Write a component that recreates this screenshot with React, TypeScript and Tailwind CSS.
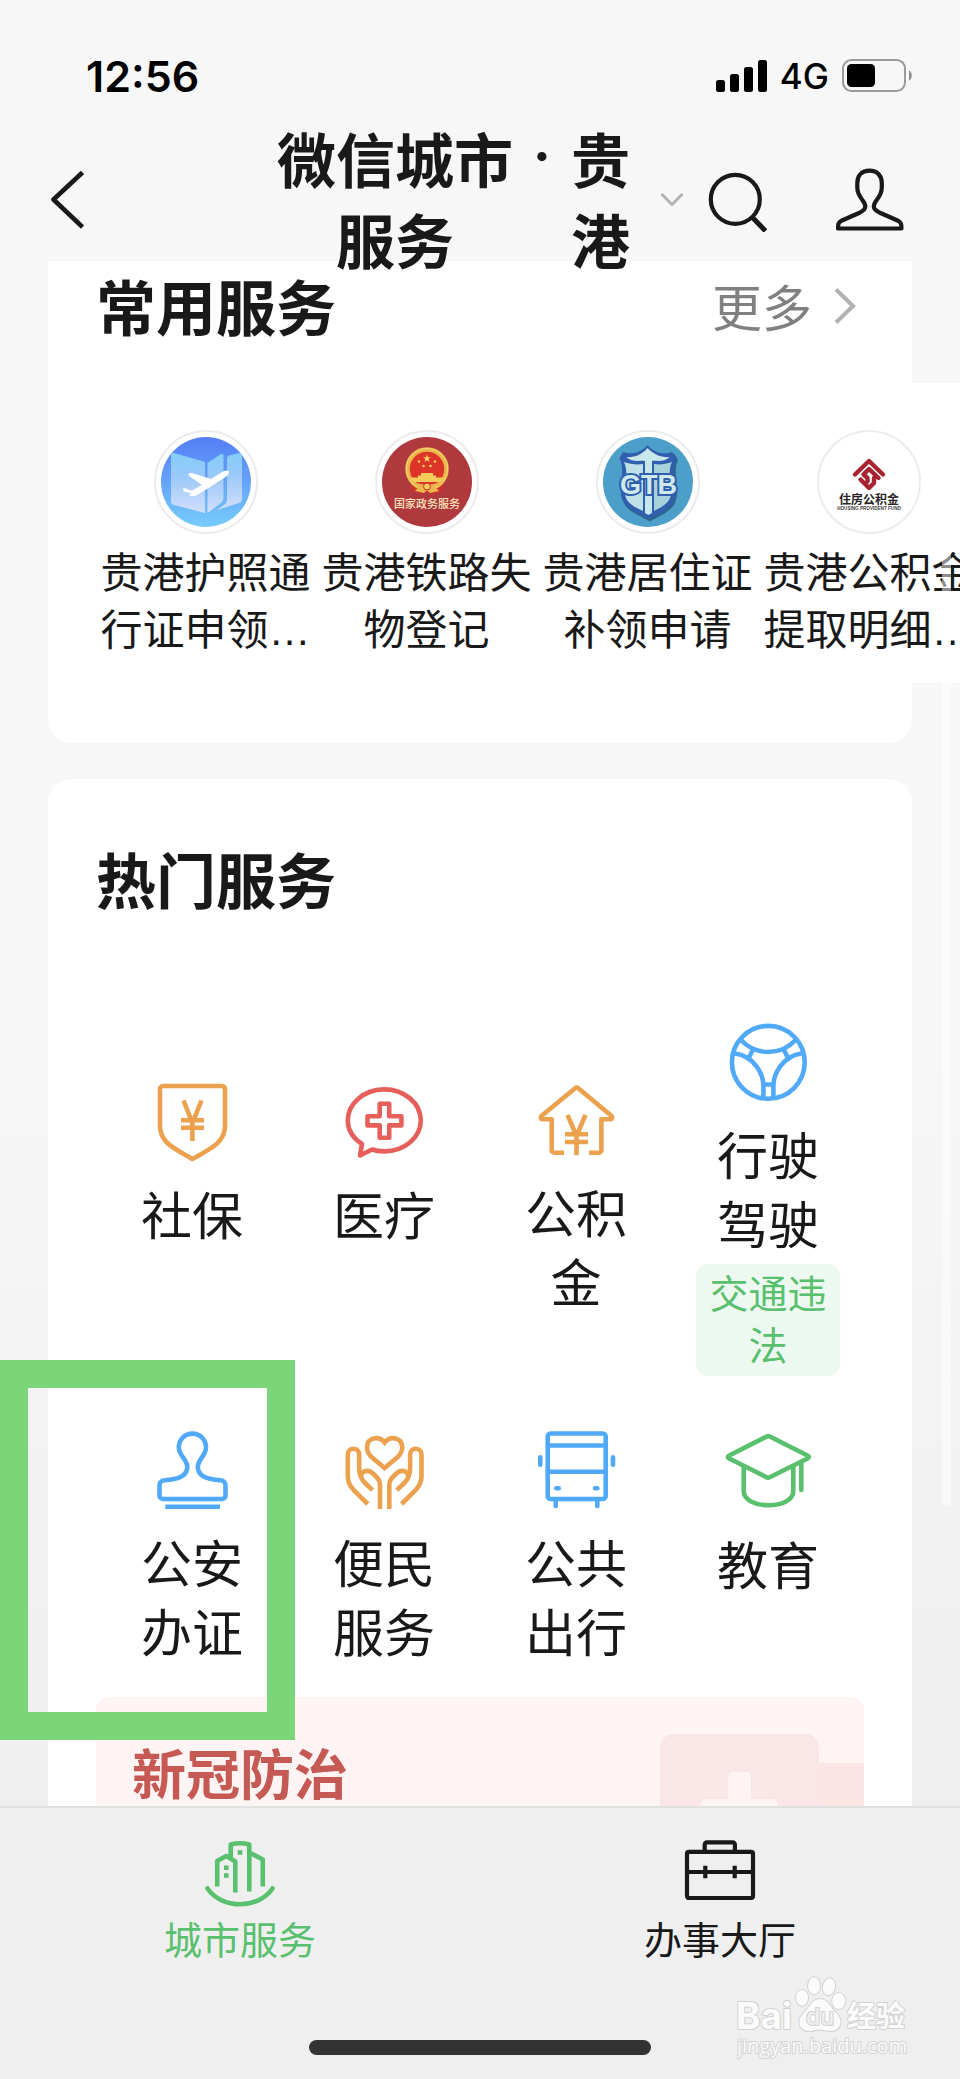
import type { ReactNode } from "react";

function StrokeIcon({ color, children }: { color: string; children: ReactNode }) {
  return (
    <svg viewBox="0 0 84 84" className={`size-[84px] shrink-0 overflow-visible ${color}`} fill="none"
      stroke="currentColor" strokeWidth="4.6" strokeLinejoin="round" aria-hidden="true">
      {children}
    </svg>
  );
}

function ShieldYenIcon() {
  return (
    <StrokeIcon color="text-[#eca14e]">
      <path d="M13 6H72a3 3 0 0 1 3 3V46C75 62 62 68 42.4 79C23 68 10 62 10 46V9a3 3 0 0 1 3-3z" />
      <path d="M33.5 20.5 42.4 43 51.5 20.5M31 40.2H54M31 47.8H54M42.4 38V61" strokeLinejoin="miter" />
    </StrokeIcon>
  );
}

function MedicalIcon() {
  return (
    <StrokeIcon color="text-[#e75f5a]">
      <path d="M42.3 71.4A36.5 31 0 1 0 5.8 40.7C5.8 50 11 58 20 64L18 75.5 30 69.5C34 71 38 71.4 42.3 71.4z" />
      <path d="M37.7 23.8h9.5v12.4h12.2v9.2H47.2v12.4h-9.5V45.4H25.5v-9.2h12.2z" />
    </StrokeIcon>
  );
}

function HouseYenIcon() {
  return (
    <StrokeIcon color="text-[#eca14e]">
      <path d="M30 74.8H20.5a2.8 2.8 0 0 1-2.8-2.8V41.3H9C7 41.3 6 39 8 37.5L40.8 10.5a3 3 0 0 1 3.8 0L77 37.5C79 39 78 41.3 76 41.3H67.4V72a2.8 2.8 0 0 1-2.8 2.8H55" />
      <path d="M33.5 36.8 42.5 58 51.5 36.8M31 56.3H54M31 64H54M42.5 54V77.2" strokeLinejoin="miter" />
    </StrokeIcon>
  );
}

function WheelIcon() {
  return (
    <StrokeIcon color="text-[#51a9f9]">
      <circle cx="42.3" cy="42.3" r="36.4" />
      <path d="M15 20C30 36 54.6 36 69.6 20" />
      <path d="M9 33.5C28 36 37.4 54 37.4 66V78M75.6 33.5C56.6 36 47.4 54 47.4 66V78" />
      <path d="M26.7 30 22.5 38.5M58 30 62.2 38.5M37 64.5H48" />
    </StrokeIcon>
  );
}

function StampIcon() {
  return (
    <StrokeIcon color="text-[#51a9f9]">
      <path d="M13 71H72a3.5 3.5 0 0 0 3.5-3.5V57a5 5 0 0 0-5-4.8C56 51.5 47.8 48 47.8 39C47.8 31 56 28 56 19.2a13.6 13.6 0 0 0-27.2 0C28.8 28 37.3 31 37.3 39C37.3 48 29 51.5 14.5 52.2a5 5 0 0 0-5 4.8V67.5a3.5 3.5 0 0 0 3.5 3.5z" />
      <path d="M15.3 78.8H70" />
    </StrokeIcon>
  );
}

function HandsIcon() {
  const hand = (
    <>
      <path d="M25.7 76 11.5 61.8C7 57 5.8 53 5.8 48.5V26.5a5.7 5.7 0 0 1 11.4 0V40C17.2 47 19 51 23 55L30.5 62.2" />
      <path d="M19 48C20 42.5 26.5 41 31 45.5 36 50.5 38 52 38 57V81" />
    </>
  );
  return (
    <StrokeIcon color="text-[#eca14e]">
      <path d="M42.6 14.5C37 7.5 25 9 25 19.5 25 24 27 26.5 29.5 29L42.6 40 55.7 29C58.2 26.5 60.2 24 60.2 19.5 60.2 9 48.2 7.5 42.6 14.5z" strokeLinejoin="miter" />
      {hand}
      <g transform="translate(85.3 0) scale(-1 1)">{hand}</g>
    </StrokeIcon>
  );
}

function BusIcon() {
  return (
    <StrokeIcon color="text-[#51a9f9]">
      <rect x="13.7" y="5.5" width="58" height="65.5" rx="3" />
      <path d="M14 17.5H71M14 43.8H71" />
      <path d="M6.3 29.3V36.7M79 29.3V36.7M22.3 60.3H24.7M61 60.3H63.4M21.7 73V78M63.3 73V78" strokeLinecap="round" />
    </StrokeIcon>
  );
}

function CapIcon() {
  return (
    <StrokeIcon color="text-[#59c06d]">
      <path d="M40.8 6.5a3.5 3.5 0 0 1 3 0L81.5 25.5c1.8 1 1.8 2 0 3L43.8 47.3a3.5 3.5 0 0 1-3 0L3.2 28.5c-1.8-1-1.8-2 0-3z" />
      <path d="M17.7 36V61C17.7 80 67.3 80 67.3 61V36" />
      <path d="M75.3 32V60" strokeLinecap="round" />
    </StrokeIcon>
  );
}

function PassportLogo() {
  return (
    <svg viewBox="0 0 90 90" className="size-[90px]" aria-hidden="true">
      <defs>
        <linearGradient id="sky" x1="0" y1="0" x2="0" y2="1">
          <stop offset="0" stopColor="#557df5" />
          <stop offset="1" stopColor="#76ccfb" />
        </linearGradient>
        <linearGradient id="page" x1="0" y1="0" x2="0" y2="1">
          <stop offset="0" stopColor="#84cdfa" />
          <stop offset="0.4" stopColor="#9bc9fa" />
          <stop offset="1" stopColor="#d3defb" />
        </linearGradient>
        <clipPath id="disc"><circle cx="45" cy="45" r="45" /></clipPath>
      </defs>
      <g clipPath="url(#disc)">
        <rect width="90" height="90" fill="url(#sky)" />
        <path d="M10 18q0-3 3-2L44 25V76L13 68q-3-1-3-4z" fill="url(#page)" />
        <path d="M46.5 26 60 17q2.5-1 2.5 2V61q0 3-2.5 5L46.5 76z" fill="url(#page)" />
        <path d="M66 21q0-2 2-2.5L78 16q3-.5 3 2V62q0 3-3 4L56 73 63 68q3-2 3-5z" fill="url(#page)" />
        <path d="M22 51.5q3-1 6 1.5l3 .5L41 48 28 39q-2-3 3-3L50 42 63 34q5-1.5 5 1 0 3-5 6L46 52 36 58q-4 2-8 1l2-3-6-1q-2-1-2-3.5z" fill="#fff" />
      </g>
    </svg>
  );
}

function GovernmentLogo() {
  return (
    <svg viewBox="0 0 90 90" className="size-[90px]" aria-hidden="true">
      <circle cx="45" cy="45" r="45" fill="#b0393e" />
      <path d="M28 44 30 54 40 57 45 55 50 57 60 54 62 44z" fill="#d0302a" />
      <circle cx="45" cy="32" r="19.5" fill="#dc3428" stroke="#eab64c" strokeWidth="4.5" />
      <circle cx="45" cy="32" r="20.5" fill="none" stroke="#f5d573" strokeWidth="1" />
      <path d="M45 17.5 46 20.3H49L46.6 22 47.5 25 45 23.2 42.5 25 43.4 22 41 20.3H44z" fill="#f6d35f" />
      <circle cx="37" cy="24.5" r="1.3" fill="#f6d35f" />
      <circle cx="53" cy="24.5" r="1.3" fill="#f6d35f" />
      <circle cx="41.5" cy="29" r="1.3" fill="#f6d35f" />
      <circle cx="48.5" cy="29" r="1.3" fill="#f6d35f" />
      <path d="M39 36H51V38.5H54V40.5H62L59 45H31L28 40.5H36V38.5H39z" fill="#f3cb5b" />
      <path d="M34 46Q45 49 56 46L53 50 57 54 48 56 45 53 42 56 33 54 37 50z" fill="#eab64c" />
      <circle cx="45" cy="49.5" r="3.5" fill="#f3cb5b" stroke="#d0302a" />
      <text x="45" y="71" textAnchor="middle" fontSize="11" fontWeight="500" fill="#f8e2bb">国家政务服务</text>
    </svg>
  );
}

function GtbLogo() {
  return (
    <svg viewBox="0 0 90 90" className="size-[90px]" aria-hidden="true">
      <circle cx="45" cy="45" r="45" fill="#4b9fc9" />
      <path d="M45.5 10C39 18 29 20 21 17L17.5 23C24 37 16 51 20 64 24 75 36 78 47 84.5 58 78 71 73 73 63 77 49 69 37 75 23L71.5 17C62 20 52 18 45.5 10z" fill="#1d3f66" opacity="0.6" />
      <path d="M44.5 8C38 16 28 18 20 15L16.5 21C23 35 15 49 19 62 23 72 35 76 46 82 57 76 69 71 71 61 75 47 67 35 73 21L69.5 15C61 18 51 16 44.5 8z" fill="#2f5fae" />
      <path d="M21 25C27 38 19 50 23 61 26 68 34 71 40 74V27C33 28 27 27 21 25z" fill="#bfe0e6" />
      <path d="M69 25C63 38 71 48 67.5 60 65 67 57 71 51 74V27C57 28 63 27 69 25z" fill="#a6d2d9" />
      <path d="M44.5 11C39 18 30 21 23 20 30 26 37 23 42 24V76L45.5 78 49 76V24C53 23 60 26 67 20 60 21 51 18 44.5 11z" fill="#c8e7ea" />
      <text x="45.5" y="57" textAnchor="middle" fontSize="27" fontWeight="700" fontFamily="Liberation Sans Narrow, Liberation Sans, sans-serif"
        fill="#cfeaec" stroke="#2f5fae" strokeWidth="4" paintOrder="stroke">GTB</text>
    </svg>
  );
}

function HousingFundLogo() {
  return (
    <svg viewBox="0 0 90 90" className="size-[90px]" aria-hidden="true">
      <g fill="none" stroke="#a82331" strokeWidth="4.4" strokeLinejoin="round" strokeLinecap="round">
        <path d="M31 37.5 45 24 59 37.5" />
        <path d="M36.5 42.5 45 51 50 46V41" />
        <path d="M54.5 41 45 32 39.5 37.5 43.5 41V44.5" />
      </g>
      <text x="45" y="66.5" textAnchor="middle" fontSize="12" fontWeight="700" fill="#2b2425">住房公积金</text>
      <text x="45" y="73" textAnchor="middle" fontSize="4.6" fontWeight="700" fontFamily="Liberation Sans" fill="#443c3c">HOUSING PROVIDENT FUND</text>
    </svg>
  );
}

const commonServices = [
  { label: "贵港护照通行证申领…", logo: <PassportLogo /> },
  { label: "贵港铁路失物登记", logo: <GovernmentLogo /> },
  { label: "贵港居住证补领申请", logo: <GtbLogo /> },
  { label: "贵港公积金提取明细…", logo: <HousingFundLogo /> },
];

const hotServices = [
  { label: "社保", icon: <ShieldYenIcon /> },
  { label: "医疗", icon: <MedicalIcon /> },
  { label: "公积金", icon: <HouseYenIcon /> },
  { label: "行驶驾驶", icon: <WheelIcon />, tag: "交通违法" },
  { label: "公安办证", icon: <StampIcon />, marked: true },
  { label: "便民服务", icon: <HandsIcon /> },
  { label: "公共出行", icon: <BusIcon /> },
  { label: "教育", icon: <CapIcon /> },
];

function StatusBar() {
  return (
    <div className="flex h-[139px] shrink-0 items-start justify-between pt-[51px] pr-12 pl-[86px] text-black">
      <span className="text-[43px] leading-[50px] font-semibold">12:56</span>
      <div className="flex h-[50px] items-center gap-[13px]">
        <svg width="51" height="32" viewBox="0 0 51 32" aria-hidden="true">
          <rect x="0" y="20" width="9" height="12" rx="2.5" />
          <rect x="14" y="14" width="9" height="18" rx="2.5" />
          <rect x="28" y="7" width="9" height="25" rx="2.5" />
          <rect x="42" y="0" width="9" height="32" rx="2.5" />
        </svg>
        <span className="text-[35px] leading-[50px] font-medium">4G</span>
        <svg width="70" height="34" viewBox="0 0 70 34" aria-hidden="true">
          <rect x="1" y="1" width="62" height="31" rx="8.5" fill="none" stroke="#9b9b9b" strokeWidth="2" />
          <rect x="5" y="5" width="28" height="23" rx="4.5" />
          <path d="M67 11.5C70.7 13 70.7 20 67 21.5z" fill="#8d8d8d" />
        </svg>
      </div>
    </div>
  );
}

function Header() {
  return (
    <header className="relative z-10 flex h-[122px] shrink-0 items-center pr-14 pl-12 text-[#191919]">
      <a href="#" aria-label="返回">
        <svg width="36" height="60" viewBox="0 0 36 60" fill="none" stroke="currentColor" strokeWidth="4.6" strokeLinejoin="round">
          <path d="M34.5 2.5 5.5 29.5 34.5 57" />
        </svg>
      </a>
      <button className="ml-auto flex items-center">
        <span className="flex items-start pt-1 text-center text-[59px] leading-[81px] font-semibold">
          <span className="w-[4em]">微信城市服务</span>
          <span className="w-[58px] leading-[70px]">·</span>
          <span className="w-[1em]">贵港</span>
        </span>
        <svg width="24" height="16" viewBox="0 0 24 16" className="ml-[30px]" fill="none" stroke="#b2b2b2" strokeWidth="3">
          <path d="M1.5 2 12 12.5 22.5 2" />
        </svg>
      </button>
      <button aria-label="搜索" className="ml-6">
        <svg width="60" height="64" viewBox="0 0 60 64" fill="none" stroke="currentColor" strokeWidth="4.2">
          <circle cx="27.3" cy="31.3" r="24.5" />
          <path d="M44.5 49.5 57.5 63" strokeWidth="5" />
        </svg>
      </button>
      <button aria-label="我的" className="ml-[68px]">
        <svg width="68" height="64" viewBox="0 0 68 64" fill="none" stroke="currentColor" strokeWidth="4.2" strokeLinejoin="round">
          <path d="M33.5 2.7C25.5 2.7 21.3 8 21.3 15V19.5C21.3 30 29.3 32 29.3 38.5 29.3 42 26 43.5 23 45L6 52.5C2.5 54 2 56 2 60.5H65.5C65.5 56 65 54 61.5 52.5L44.5 45C41.5 43.5 37.8 42 37.8 38.5 37.8 32 45.8 30 45.8 19.5V15C45.8 8 41.5 2.7 33.5 2.7z" />
        </svg>
      </button>
    </header>
  );
}

function CommonServices() {
  return (
    <section className="mx-12 rounded-b-3xl bg-white pt-1.5 pb-[60px]">
      <div className="flex items-center justify-between pr-14 pl-12">
        <h2 className="text-[60px] leading-[84px] font-semibold">常用服务</h2>
        <a href="#" className="flex items-center gap-5 text-[50px] leading-[84px] text-[#808080]">
          更多
          <svg width="24" height="42" viewBox="0 0 24 42" fill="none" stroke="#b2b2b2" strokeWidth="4">
            <path d="M4 1.5 21 18 4 34.5" />
          </svg>
        </a>
      </div>
      <div className="mt-8 -mr-12 flex overflow-hidden bg-white pt-[47px] pb-6 pl-[47px]">
        {commonServices.map((item) => (
          <a key={item.label} href="#" className="flex w-[221px] shrink-0 flex-col items-center px-[5px]">
            <span className="flex size-[104px] items-center justify-center rounded-full border-2 border-[#ececec] bg-white">
              {item.logo}
            </span>
            <span className="mt-[11px] text-center font-['Liberation_Sans','Noto_Sans_CJK_SC',sans-serif] text-[42px] leading-[57px]">
              {item.label}
            </span>
          </a>
        ))}
      </div>
    </section>
  );
}

function Banner() {
  return (
    <a href="#" className="mx-12 mt-[29px] flex h-[220px] items-start justify-between overflow-hidden rounded-xl bg-[#fef4f4] pl-9">
      <span className="pt-10 text-[54px] leading-[78px] font-bold text-[#c65954]">新冠防治</span>
      <svg width="204" height="220" viewBox="0 0 204 220" aria-hidden="true">
        <rect x="0" y="37" width="159" height="200" rx="14" fill="#fae6e6" />
        <rect x="159" y="66" width="45" height="170" fill="#fae4e4" />
        <rect x="68" y="75" width="23" height="77" rx="5" fill="#fef4f4" />
        <rect x="41" y="102" width="77" height="23" rx="5" fill="#fef4f4" />
      </svg>
    </a>
  );
}

function HotServices() {
  return (
    <section className="mx-12 mt-9 rounded-t-3xl bg-white pt-[61px]">
      <h2 className="px-12 text-[60px] leading-[84px] font-semibold">热门服务</h2>
      <div className="mt-24 grid grid-cols-4 items-center gap-y-[52px] px-12">
        {hotServices.map((item) => (
          <a key={item.label} href="#" className="relative flex min-h-[236px] flex-col items-center">
            {item.icon}
            <span className="mt-[18px] w-[120px] text-center text-[51px] leading-[69px]">{item.label}</span>
            {item.tag && (
              <span className="mt-1 w-36 rounded-xl bg-[#edf8f1] px-3 py-1 text-center text-[39px] leading-[52px] text-[#59c06d]">
                {item.tag}
              </span>
            )}
            {item.marked && (
              <span className="absolute -top-[68px] -right-[7px] -bottom-[72px] -left-24 z-10 border-[28px] border-[#7bd679]" />
            )}
          </a>
        ))}
      </div>
      <Banner />
    </section>
  );
}

function Watermark() {
  return (
    <svg width="176" height="88" viewBox="0 0 176 88" className="absolute right-12 bottom-[19px]" fill="#fbfbfb"
      stroke="#d2d2d2" strokeWidth="2" paintOrder="stroke" strokeLinejoin="round">
      <text x="0" y="57" fontSize="37" fontWeight="700">Bai</text>
      <ellipse cx="66" cy="25.7" rx="6" ry="8" />
      <ellipse cx="78" cy="13.7" rx="6" ry="8.5" />
      <ellipse cx="93" cy="14.7" rx="6" ry="8.5" transform="rotate(12 93 14.7)" />
      <ellipse cx="102.7" cy="29" rx="6.5" ry="8" />
      <path d="M84 27C76 27 73 36 68 41 60 48 63 59 73 59 78 59 80 57.5 84 57.5S90 59 95 59C105 59 108 48 100 41 95 36 92 27 84 27z" />
      <text x="84" y="53" fontSize="23" fontWeight="500" textAnchor="middle" fill="#efefef">du</text>
      <text x="111" y="55" fontSize="29" fontWeight="700">经验</text>
      <text x="1" y="81" fontSize="20" fontFamily="Open Sans, sans-serif">jingyan.baidu.com</text>
    </svg>
  );
}

function TabBar() {
  return (
    <nav className="relative flex h-[273px] shrink-0 border-t-2 border-[#e0e0e0] bg-[#efefef] pt-[30px]">
      <a href="#" className="flex flex-1 flex-col items-center text-[#59c06d]">
        <svg width="72" height="72" viewBox="0 0 72 72" fill="none" stroke="currentColor" strokeWidth="4.6" aria-hidden="true">
          <path d="M3.5 50.5C18 71.5 54 71.5 68.5 50.5" strokeLinecap="round" />
          <path d="M13.2 48.5V23L22.3 18 31.3 23.5V54.5M26.7 19V6.5Q36 4 45.3 6.5V53.5M45.3 14.5 58.8 21.5V48.5" strokeLinejoin="round" />
          <path d="M33.7 14.5H38.3M20 29.8H24.6M20 37.5H24.6" />
        </svg>
        <span className="text-[38px] leading-[60px]">城市服务</span>
      </a>
      <a href="#" className="flex flex-1 flex-col items-center text-[#191919]">
        <svg width="72" height="72" viewBox="0 0 72 72" fill="none" stroke="currentColor" strokeWidth="4.2" aria-hidden="true">
          <rect x="3" y="13.8" width="66" height="46.2" rx="2" />
          <path d="M20.7 13V6.5a2.2 2.2 0 0 1 2.2-2.2H48.7a2.2 2.2 0 0 1 2.2 2.2V13M3 34H69M21.3 27.7V40.3M50.7 27.7V40.3" />
        </svg>
        <span className="text-[38px] leading-[60px]">办事大厅</span>
      </a>
      <div className="absolute bottom-6 left-1/2 h-[15px] w-[342px] -translate-x-1/2 rounded-full bg-[#333]" />
      <Watermark />
    </nav>
  );
}

export default function App() {
  return (
    <div className="relative flex h-screen flex-col overflow-hidden bg-linear-to-b from-[#f7f7f7] from-50% to-[#efefef] to-85% font-['Inter','Noto_Sans_CJK_SC',sans-serif] text-[#191919]">
      <StatusBar />
      <Header />
      <main className="relative min-h-0 flex-1 overflow-hidden">
        <CommonServices />
        <HotServices />
        {/* scroll thumb */}
        <div className="absolute top-[285px] right-[9px] h-[960px] w-[9px] rounded-full bg-white/50" />
      </main>
      <TabBar />
    </div>
  );
}
